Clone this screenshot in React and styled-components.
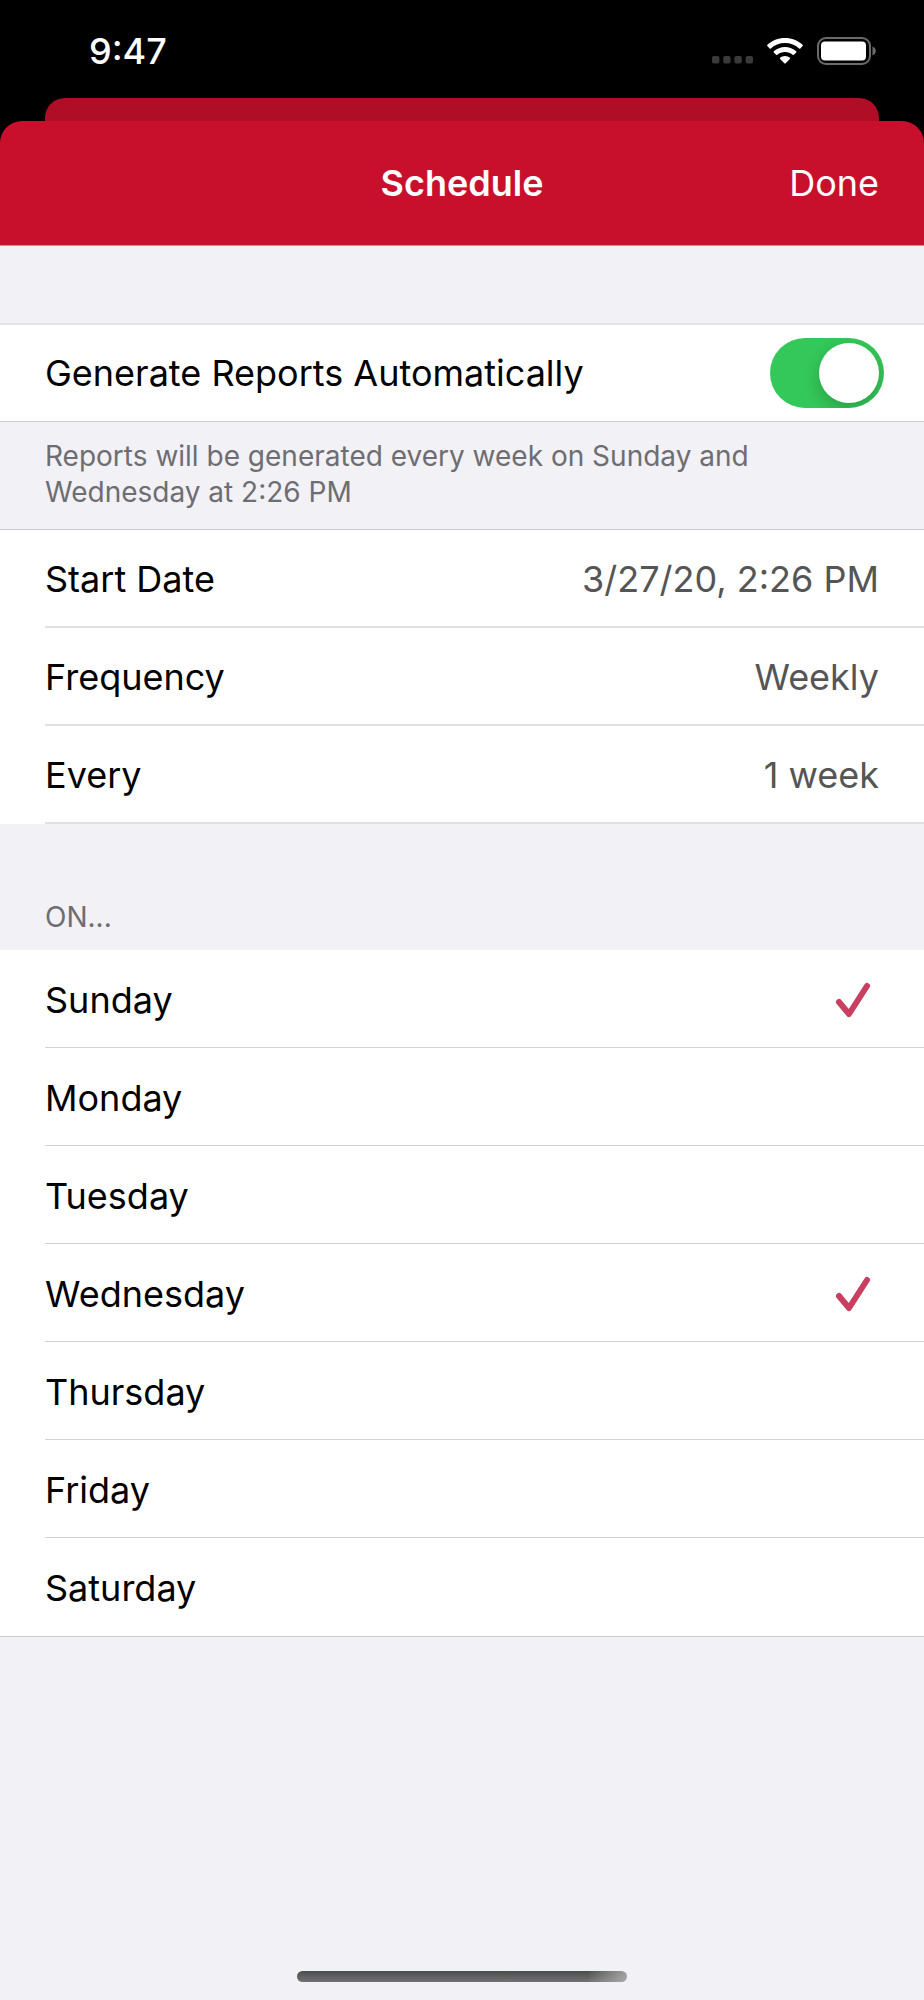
import styled, { createGlobalStyle } from "styled-components";
import { useState } from "react";

const GlobalStyle = createGlobalStyle`
    * {
        box-sizing : border-box;
    }
    body {
        margin : 0;
        background-color : #f2f1f6;
        font-family : Inter, "Liberation Sans", sans-serif;
        color : #000;
    }
    button {
        font-family : inherit;
        border : none;
        background : none;
        padding : 0;
        cursor : pointer;
    }
`
const Container = styled.div`
    min-height : 100vh;
    display : flex;
    flex-direction : column;
`
const Top = styled.div`
    background-color : #000;
`
const StatusBar = styled.div`
    height : 98px;
    padding : 3px 48px 0 89px;
    display : flex;
    align-items : center;
    justify-content : space-between;
    color : #fff;
`
const Time = styled.span`
    font-size : 36px;
    font-weight : 500;
`
const StatusIcons = styled.div`
    display : flex;
    align-items : center;
    gap : 14px;
`
const BackCard = styled.div`
    height : 23px;
    margin : 0 45px;
    border-radius : 20px 20px 0 0;
    background-color : #b00d27;
`
const Header = styled.header`
    height : 125px;
    padding : 0 45px;
    display : grid;
    grid-template-columns : 1fr auto 1fr;
    align-items : center;
    background-color : #c8102c;
    border-bottom : 1px solid #cf8894;
    border-radius : 22px 22px 0 0;
    color : #fff;
`
const Title = styled.h1`
    grid-column : 2;
    margin : 0;
    font-size : 36px;
    font-weight : 600;
`
const Done = styled.button`
    justify-self : end;
    font-size : 36px;
    color : #fff;
`
const Section = styled.section`
    background-color : #fff;
    border-top : ${props => props.$top || "none"};
    border-bottom : ${props => props.$bottom || "none"};
`
const Spacer = styled.div`
    height : 77px;
`
const ToggleRow = styled.label`
    height : 96px;
    padding : 0 40px 0 45px;
    display : flex;
    align-items : center;
    justify-content : space-between;
    font-size : 36px;
    cursor : pointer;
`
const Switch = styled.input`
    appearance : none;
    width : 114px;
    height : 70px;
    margin : 0;
    padding : 5px;
    display : flex;
    justify-content : ${props => props.checked ? "flex-end" : "flex-start"};
    border-radius : 35px;
    background-color : ${props => props.checked ? "#34c759" : "#e9e9eb"};
    overflow : hidden;
    cursor : pointer;

    &::before {
        content : "";
        width : 60px;
        height : 60px;
        border-radius : 50%;
        background-color : #fff;
        box-shadow : 0 6px 16px rgba(0, 0, 0, 0.2);
    }
`
const Note = styled.p`
    margin : 0;
    padding : 16px 130px 19px 45px;
    font-size : 28px;
    line-height : 36px;
    color : #6d6d72;
`
const GroupTitle = styled.h2`
    margin : 0;
    padding : 75px 45px 15px;
    font-size : 28px;
    line-height : 36px;
    font-weight : 400;
    color : #6d6d72;
`
const SettingRow = styled.button`
    width : 100%;
    display : block;
    && {
        padding-left : 45px;
    }
`
const DayRow = styled.label`
    display : block;
    padding-left : 45px;
    cursor : pointer;
`
const RowInner = styled.span`
    height : 98px;
    padding : 2px 45px 0 0;
    display : flex;
    align-items : center;
    justify-content : space-between;
    border-bottom : ${props => props.$line};
    font-size : 36px;
    color : #000;
`
const Value = styled.span`
    color : #555;
`
const HiddenBox = styled.input`
    appearance : none;
    width : 0;
    height : 0;
    margin : 0 auto 0 0;
`
const Check = styled.svg`
    margin-right : 8px;
`
const HomeBar = styled.div`
    width : 330px;
    height : 11px;
    margin : auto auto 18px;
    border-radius : 6px;
    background : linear-gradient(to right, transparent 88%, rgba(200, 200, 200, 0.65)),
        linear-gradient(#4c4e4e, #727273);
`

const settings = [
    { name: "Start Date", value: "3/27/20, 2:26 PM" },
    { name: "Frequency", value: "Weekly" },
    { name: "Every", value: "1 week" },
]
const days = ["Sunday", "Monday", "Tuesday", "Wednesday", "Thursday", "Friday", "Saturday"]

const Dots = () => (
    <svg width="41" height="28" viewBox="0 0 41 28" fill="#3a3a3c">
        {[0, 11.2, 22.4, 33.6].map((x) => (
            <rect key={x} x={x} y="19" width="7.4" height="7.4" rx="2" />
        ))}
    </svg>
)

const Wifi = () => (
    <svg width="36" height="28" viewBox="0 0 36 28" fill="#fff">
        <path d="M18 .9C24.8.9 31 3.5 35.6 7.8c.4.4.4.9 0 1.3l-2.2 2.3c-.4.4-.9.4-1.3 0C28.4 8 23.5 6 18 6S7.6 8 3.9 11.4c-.4.4-.9.4-1.3 0L.4 9.1c-.4-.4-.4-.9 0-1.3C5 3.5 11.2.9 18 .9z" />
        <path d="M18 9.9c4.3 0 8.2 1.6 11.2 4.3.4.4.4.9 0 1.3l-2.3 2.3c-.4.4-.9.4-1.3 0-2-1.8-4.7-2.8-7.6-2.8s-5.6 1-7.6 2.8c-.4.4-.9.4-1.3 0l-2.3-2.3c-.4-.4-.4-.9 0-1.3 3-2.7 6.9-4.3 11.2-4.3z" />
        <path d="M18 18.9c1.9 0 3.6.7 4.9 1.8.4.4.4.9 0 1.3l-4.2 4.3c-.4.4-1 .4-1.4 0L13.1 22c-.4-.4-.4-.9 0-1.3 1.3-1.1 3-1.8 4.9-1.8z" />
    </svg>
)

const Battery = () => (
    <svg width="59" height="28" viewBox="0 0 59 28">
        <rect x="1" y="1" width="52" height="26" rx="8" fill="none" stroke="#6b6b6b" strokeWidth="2" />
        <rect x="4" y="4.500" width="45" height="19" rx="4" fill="#fff" />
        <path d="M55.5 9.5c2 .8 3.3 2.5 3.3 4.5s-1.3 3.7-3.3 4.5z" fill="#6b6b6b" />
    </svg>
)

const App = () => {
    const [automatic, setAutomatic] = useState(true)
    const [selected, setSelected] = useState(["Sunday", "Wednesday"])
    const handleDay = (day) => {
        if (selected.includes(day)) {
            setSelected(selected.filter((item) => item !== day))
        }
        else {
            setSelected([...selected, day])
        }
    }
    return (
        <Container>
            <GlobalStyle />
            <Top>
                <StatusBar>
                    <Time>9:47</Time>
                    <StatusIcons>
                        <Dots />
                        <Wifi />
                        <Battery />
                    </StatusIcons>
                </StatusBar>
                <BackCard />
                <Header>
                    <Title>Schedule</Title>
                    <Done>Done</Done>
                </Header>
            </Top>
            <Spacer />
            <Section $top="2px solid #e4e4e8" $bottom="1px solid #cbcbcf">
                <ToggleRow>
                    Generate Reports Automatically
                    <Switch
                        type="checkbox"
                        role="switch"
                        checked={automatic}
                        onChange={() => setAutomatic(!automatic)}
                    />
                </ToggleRow>
            </Section>
            <Note>Reports will be generated every week on Sunday and Wednesday at 2:26 PM</Note>
            <Section $top="1px solid #cbcbcf">
                {settings.map((item) => (
                    <SettingRow key={item.name}>
                        <RowInner $line="2px solid #e0e0e2">
                            {item.name}
                            <Value>{item.value}</Value>
                        </RowInner>
                    </SettingRow>
                ))}
            </Section>
            <GroupTitle>ON...</GroupTitle>
            <Section $bottom="1px solid #cbcbcf">
                {days.map((day, i) => (
                    <DayRow key={day}>
                        <RowInner $line={i < days.length - 1 ? "1px solid #d2d2d4" : "none"}>
                            {day}
                            <HiddenBox
                                type="checkbox"
                                checked={selected.includes(day)}
                                onChange={() => handleDay(day)}
                            />
                            {selected.includes(day) && (
                                <Check width="37" height="36" viewBox="0 0 37 36" fill="none" stroke="#c93f5f" strokeWidth="6" strokeLinecap="round" strokeLinejoin="round">
                                    <path d="M5 20 15 32 33 4" />
                                </Check>
                            )}
                        </RowInner>
                    </DayRow>
                ))}
            </Section>
            <HomeBar />
        </Container>
    )
}
export default App
